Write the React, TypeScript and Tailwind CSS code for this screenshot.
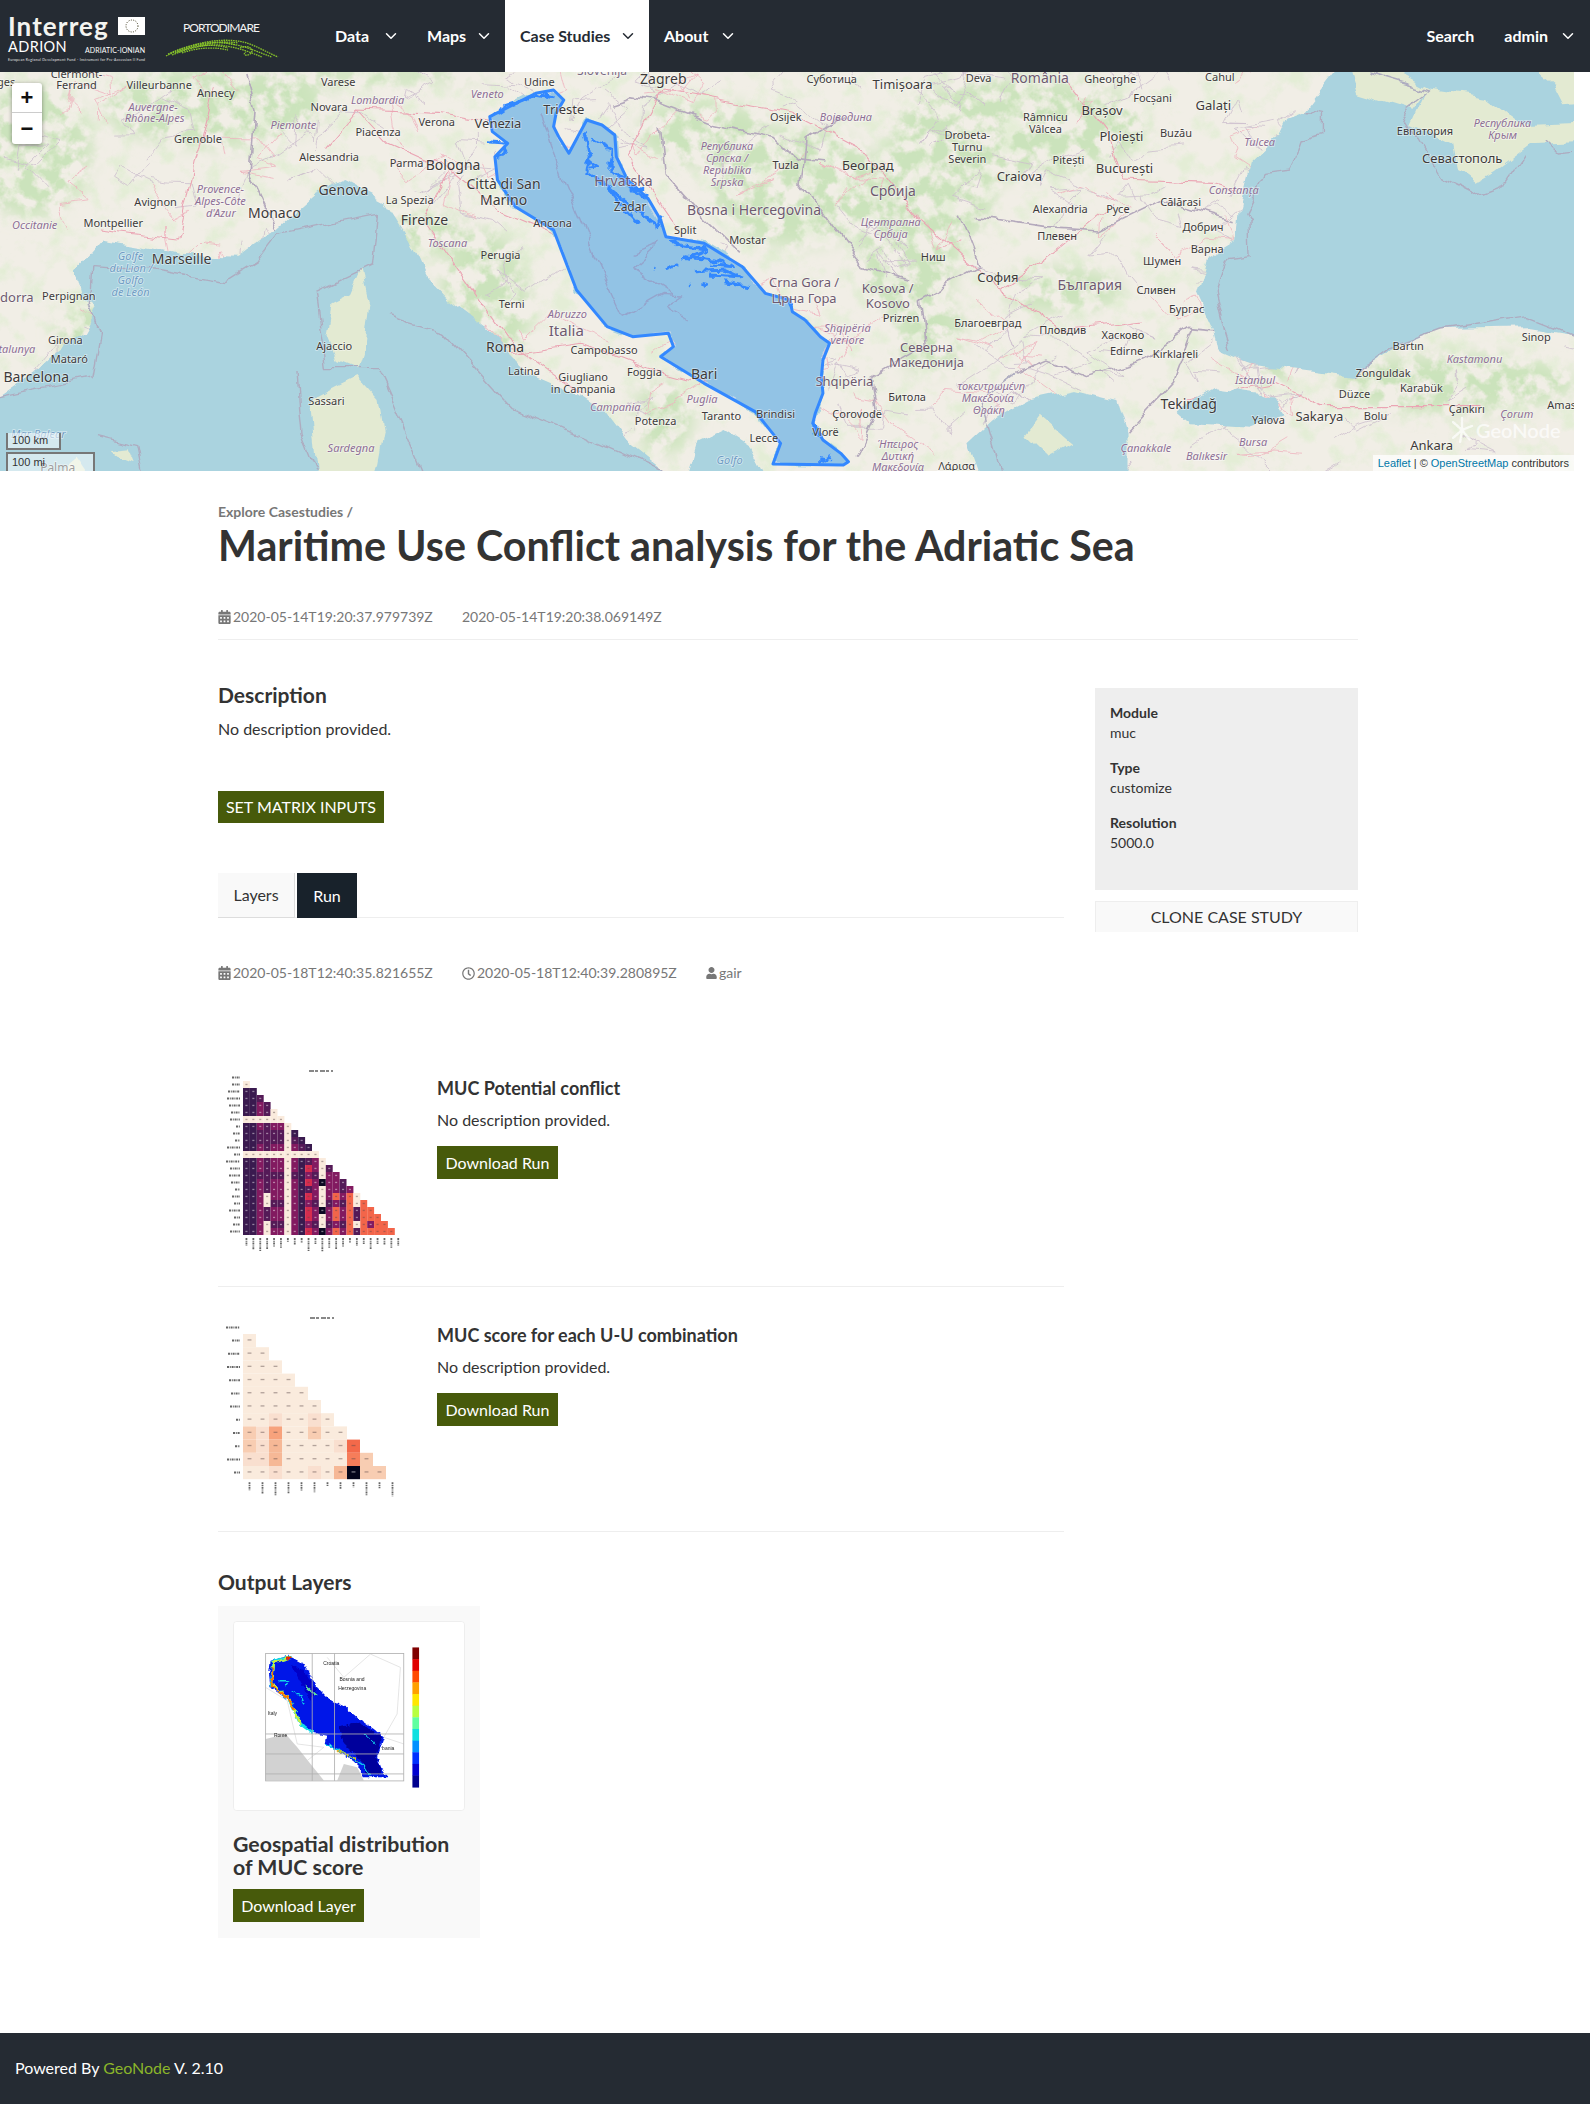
import { ChevronDown } from "lucide-react";
import { FaCalendarAlt, FaRegClock, FaUser } from "react-icons/fa";

// map coordinates: left labels are in "Z" space, x / 1.96 and y / 3 give page pixels
type Label = [string, number, number, number?, string?];
const R = "#8d6f95"; // region labels
const S = "#6f9cc4"; // sea labels
const T = "#3d3a3a";

const labelsWest: Label[] = [
  ["ges", 12, 245], ["Clermont-", 150, 222], ["Ferrand", 150, 255], ["Villeurbanne", 312, 255], ["Annecy", 423, 278],
  ["Varese", 663, 247], ["Udine", 1057, 245], ["Zagreb", 1300, 240, 14], ["Slovenija", 1180, 212, 12, "#7a6a85"],
  ["Auvergne-", 300, 320, 11, R], ["Rhône-Alpes", 303, 355, 11, R], ["Novara", 645, 320], ["Lombardia", 740, 300, 11, R],
  ["Veneto", 955, 283, 11, R], ["Trieste", 1105, 330, 13], ["Verona", 856, 366], ["Venezia", 976, 372, 13], ["Piemonte", 575, 375, 11, R],
  ["Piacenza", 741, 396], ["Grenoble", 388, 417], ["Alessandria", 645, 470], ["Parma", 797, 490], ["Bologna", 888, 498, 14],
  ["Genova", 673, 572, 14], ["Città di San", 987, 555, 14], ["Marino", 987, 602, 14], ["La Spezia", 803, 601], ["Monaco", 538, 641, 14],
  ["Provence-", 432, 568, 11, R], ["Alpes-Côte", 432, 604, 11, R], ["d'Azur", 433, 640, 11, R], ["Avignon", 305, 607], ["Firenze", 832, 663, 14],
  ["Occitanie", 68, 676, 11, R], ["Montpellier", 222, 670], ["Toscana", 877, 729, 11, R], ["Perugia", 981, 765], ["Ancona", 1083, 670],
  ["Marseille", 356, 780, 14], ["Golfe", 256, 768, 11, S], ["du Lion /", 257, 805, 11, S], ["Golfo", 256, 841, 11, S], ["de León", 256, 877, 11, S],
  ["dorra", 33, 895, 13, "#6e5a70"], ["Perpignan", 135, 889], ["Terni", 1003, 911], ["Abruzzo", 1112, 941, 11, R], ["Italia", 1110, 995, 15, "#6e5a70"],
  ["Girona", 128, 1021], ["Mataró", 136, 1078], ["talunya", 33, 1048, 11, R], ["Ajaccio", 655, 1037], ["Roma", 990, 1044, 14],
  ["Campobasso", 1184, 1051], ["Barcelona", 71, 1134, 14], ["Latina", 1027, 1113], ["Giugliano", 1143, 1130], ["in Campania", 1143, 1166],
  ["Foggia", 1263, 1116], ["Bari", 1380, 1125, 14], ["Sassari", 640, 1203], ["Puglia", 1376, 1198, 11, R], ["Campania", 1206, 1221, 11, R],
  ["Taranto", 1414, 1248], ["Brindisi", 1520, 1241], ["Potenza", 1285, 1264], ["Sardegna", 688, 1343, 11, R], ["Lecce", 1497, 1314],
  ["Golfo", 1430, 1381, 11, S], ["Mar Balear", 75, 1303, 11, S], ["Palma", 113, 1405, 12],
  ["Osijek", 1540, 350], ["Tuzla", 1540, 494], ["Република", 1425, 438, 11, R], ["Српска /", 1425, 474, 11, R], ["Republika", 1425, 510, 11, R], ["Srpska", 1425, 546, 11, R],
  ["Split", 1343, 690], ["Mostar", 1465, 721], ["Hrvatska", 1222, 545, 14, "#6e5a70"], ["Zadar", 1235, 622, 12],
  ["Bosna i Hercegovina", 1478, 634, 14, "#6e5a70"], ["Crna Gora /", 1576, 850, 13, "#6e5a70"], ["Црна Гора", 1576, 896, 13, "#6e5a70"],
];

const labelsEast: Label[] = [
  ["Суботица", 82, 238], ["Timișoara", 221, 254, 13], ["Deva", 370, 235], ["România", 490, 237, 14, "#6e5a70"], ["Gheorghe", 628, 238], ["Cahul", 843, 230],
  ["Focșani", 711, 294], ["Brașov", 612, 332, 13], ["Galați", 830, 317, 13], ["Војводина", 110, 350, 11, R], ["Râmnicu", 501, 350], ["Vâlcea", 501, 386],
  ["Drobeta-", 348, 406], ["Turnu", 348, 442], ["Severin", 348, 478], ["Ploiești", 650, 412, 13], ["Buzău", 757, 400], ["Tulcea", 921, 427, 11, R],
  ["Pitești", 546, 480], ["București", 656, 506, 13], ["Београд", 153, 497, 13], ["Craiova", 450, 532, 13], ["Србија", 202, 575, 14, "#6e5a70"],
  ["Constanța", 870, 571, 11, R], ["Călărași", 766, 606], ["Alexandria", 530, 626], ["Русе", 643, 627], ["Централна", 198, 665, 11, R], ["Србија", 198, 701, 11, R],
  ["Добрич", 810, 680], ["Плевен", 524, 709], ["Варна", 818, 747], ["Шумен", 730, 782], ["Ниш", 281, 770], ["София", 408, 833, 13], ["България", 588, 857, 14, "#6e5a70"],
  ["Сливен", 718, 869], ["Kosova /", 192, 866, 13, "#6e5a70"], ["Kosovo", 192, 911, 13, "#6e5a70"], ["Бургас", 778, 927], ["Prizren", 218, 955],
  ["Shqipëria", 113, 983, 11, R], ["veriore", 113, 1019, 11, R], ["Благоевград", 388, 970], ["Пловдив", 535, 990], ["Хасково", 653, 1006],
  ["Северна", 268, 1043, 13, "#6e5a70"], ["Македонија", 268, 1088, 13, "#6e5a70"], ["Edirne", 660, 1053], ["Kırklareli", 756, 1063],
  ["Shqipëria", 107, 1146, 13, "#6e5a70"], ["Битола", 230, 1192], ["τοκεντρωμένη", 395, 1158, 11, R], ["Μακεδονία", 388, 1193, 11, R], ["Θράκη", 390, 1229, 11, R],
  ["Tekirdağ", 782, 1215, 14], ["Yalova", 938, 1260], ["Sakarya", 1038, 1250, 13], ["Çorovodë", 132, 1242], ["Vlorë", 70, 1295],
  ["Ήπειρος", 212, 1332, 11, R], ["Δυτική", 212, 1367, 11, R], ["Μακεδονία", 212, 1402, 11, R], ["Λάρισα", 327, 1397], ["Çanakkale", 698, 1345, 11, R],
  ["Balıkesir", 817, 1367, 11, R], ["Bursa", 908, 1325, 11, R], ["Ankara", 1258, 1338, 13], ["İstanbul", 912, 1141, 11, R], ["Bolu", 1148, 1247],
  ["Düzce", 1107, 1181], ["Zonguldak", 1163, 1118], ["Karabük", 1238, 1164], ["Bartın", 1212, 1037], ["Kastamonu", 1342, 1078, 11, R], ["Sinop", 1463, 1012],
  ["Çankırı", 1327, 1226], ["Çorum", 1425, 1243, 11, R], ["Amas", 1513, 1216], ["Евпатория", 1245, 393], ["Севастополь", 1318, 477, 13], ["Республика", 1397, 369, 11, R], ["Крым", 1397, 405, 11, R],
];

const allLabels: Label[] = [...labelsWest, ...labelsEast.map((l) => [l[0], l[1] + 1548, l[2], l[3], l[4]] as Label)];

const seaWest = "-60,1230 0,1190 70,1115 95,1078 165,1000 190,930 165,900 150,810 200,720 300,745 355,765 470,770 540,690 620,580 675,540 750,600 800,720 830,820 880,900 950,980 1000,1060 1040,1120 1130,1180 1180,1230 1230,1330 1300,1415 1330,1460 -60,1460";
const corsica = "710,810 725,900 715,1030 700,1105 660,1080 640,1000 650,910 690,880";
const sardinia = "700,1130 740,1200 750,1300 730,1460 625,1460 610,1200 660,1160";
const adriatic = "1085,270 1105,300 1090,340 1085,380 1095,410 1115,460 1150,360 1180,375 1205,405 1208,470 1230,540 1270,595 1295,660 1305,710 1380,730 1455,800 1500,880 1548,900 1553,935 1578,960 1608,1010 1626,1030 1613,1080 1610,1130 1613,1180 1598,1240 1593,1270 1613,1320 1648,1360 1663,1385 1653,1395 1515,1392 1530,1330 1480,1235 1380,1150 1295,1070 1320,1040 1310,1000 1240,1010 1190,980 1130,870 1085,690 1010,620 975,540 970,470 995,430 965,395 960,350 1050,280";
const blackSea = "2633,180 2558,330 2523,350 2508,400 2448,490 2428,620 2423,720 2368,770 2348,880 2378,980 2388,1050 2448,1090 2548,1110 2648,1130 2728,1050 2818,990 2998,985 3140,1020 3140,180";
const crimea = "2798,265 2908,290 2978,370 3140,360 3140,420 2998,430 2928,510 2888,545 2858,510 2848,430 2768,370";
const aegean = "1928,1460 1898,1330 1948,1260 2018,1200 2108,1170 2188,1200 2208,1300 2208,1460";
const marmara = "2308,1230 2378,1165 2498,1190 2518,1240 2448,1280 2338,1270";
const taranto = "1340,1460 1365,1330 1420,1290 1470,1340 1510,1460";

const borders = [
  "480,216 500,330 490,520 545,700",
  "1200,310 1240,290 1280,300 1400,370 1520,410 1560,470 1620,480",
  "1290,380 1300,520 1370,640 1450,760",
  "1780,840 1690,800 1640,700 1570,560 1580,420 1650,350",
  "1880,650 1900,720 1920,800 1800,900 1810,1040 1710,1130 1720,1240 1680,1370",
  "1920,650 2050,680 2160,690 2280,600 2420,665",
  "1990,1120 2050,1080 2130,1130 2240,1080 2330,985 2400,995",
  "2340,985 2300,1150 2210,1300",
];
const maritime = [
  "180,800 175,920 195,1000 180,1130 0,1190",
  "180,800 300,810 440,848 500,790 545,700",
  "545,700 740,640 730,800 620,880 640,1100 700,1100 740,1100 770,1200 830,1415",
  "760,950 870,1000 1000,1220 1100,1280 1300,1415",
  "580,1120 590,1300 620,1415",
  "190,1310 270,1340 280,1415",
  "1060,340 1100,520 1170,780 1220,950 1300,880 1340,885 1305,920 1350,960",
  "1240,760 1290,730 1240,800 1320,880",
  "2448,660 2450,770 2400,780 2380,870 2400,1000 2410,1050",
  "2558,330 2590,340 2590,400 2550,420 2530,510 2480,520 2440,640 2450,665",
  "2680,216 2800,270 2750,330 2830,540 2890,585 2950,550 2990,460",
  "3087,460 3060,465 3030,420",
  "2650,1130 2730,1040 2820,990 2990,950 3040,980 3087,1010",
  "1960,1415 1920,1200 1990,1120",
];
const roads = [
  "640,440 700,330 860,340 1000,380", "700,330 760,430 890,520 980,630 1090,700", "190,690 350,720 380,500 420,260",
  "880,520 830,660 990,1010 1140,1180", "1300,270 1230,470 1330,690", "1300,270 1550,340 1700,460", "1700,460 1790,640 1960,870 2080,990 2240,960",
  "2200,540 2380,550 2420,570", "2200,540 2170,400 2090,240", "2330,1200 2500,1150 2590,1220 2680,1220 2900,1220", "1960,870 2060,760 2180,610",
  "1000,1060 1140,1030 1260,1100 1380,1150",
];
const greenSpots: [number, number, number, number][] = [
  [420, 320, 220, 120], [700, 225, 260, 30], [950, 920, 90, 230], [830, 700, 100, 60], [2000, 380, 250, 150], [1830, 560, 120, 200],
  [1560, 560, 170, 180], [1380, 400, 130, 100], [1780, 760, 100, 190], [2080, 870, 120, 70], [2850, 1150, 240, 90],
  [180, 1000, 70, 90], [2500, 1080, 40, 80], [1820, 1000, 70, 120], [680, 990, 40, 90], [60, 450, 120, 200], [1300, 1250, 60, 110], [680, 1280, 60, 120],
];

// thin local borders: seeded so the picture does not change between runs
function minorLines(count: number, seed: number) {
  const out: string[] = [];
  let s = seed;
  const rnd = () => {
    s = (s * 16807) % 2147483647;
    return s / 2147483647;
  };
  for (let i = 0; i < count; i++) {
    let x = rnd() * 3087;
    let y = 216 + rnd() * 1200;
    const pts = [`${x},${y}`];
    for (let k = 0; k < 4; k++) {
      x += (rnd() - 0.5) * 150;
      y += (rnd() - 0.5) * 170;
      pts.push(`${x},${y}`);
    }
    out.push(pts.join(" "));
  }
  return out;
}
const localBorders = minorLines(130, 4711);
const localRoads = minorLines(70, 911);

function AdriaMap() {
  return (
    <svg viewBox="0 72 1574 399" className="block w-full h-full" preserveAspectRatio="none">
      <defs>
        <filter id="terrain" x="0" y="0" width="100%" height="100%">
          <feTurbulence type="fractalNoise" baseFrequency="0.045" numOctaves="4" seed="7" />
          <feColorMatrix values="0 0 0 0 0.75  0 0 0 0 0.85  0 0 0 0 0.65  3.6 0 0 0 -1.75" />
        </filter>
        <filter id="mountains" x="-20%" y="-20%" width="140%" height="140%">
          <feGaussianBlur in="SourceAlpha" stdDeviation="9" result="area" />
          <feTurbulence type="fractalNoise" baseFrequency="0.06" numOctaves="4" seed="21" />
          <feColorMatrix values="0 0 0 0 0.60  0 0 0 0 0.77  0 0 0 0 0.50  4.5 0 0 0 -1.75" result="noise" />
          <feComposite in="noise" in2="area" operator="in" />
        </filter>
        <filter id="coast" x="-5%" y="-5%" width="110%" height="110%">
          <feTurbulence type="fractalNoise" baseFrequency="0.035" numOctaves="3" seed="4" />
          <feDisplacementMap in="SourceGraphic" scale="14" xChannelSelector="R" yChannelSelector="G" />
        </filter>
        <filter id="jag" x="-5%" y="-5%" width="110%" height="110%">
          <feTurbulence type="fractalNoise" baseFrequency="0.12" numOctaves="2" seed="9" />
          <feDisplacementMap in="SourceGraphic" scale="9" xChannelSelector="R" yChannelSelector="G" />
        </filter>
      </defs>
      <rect x="0" y="72" width="1574" height="399" fill="#f1eee6" />
      <rect x="0" y="72" width="1574" height="399" filter="url(#terrain)" opacity="0.8" />
      <g filter="url(#mountains)">
        <g transform="scale(0.5102 0.33333)">
          {greenSpots.map((g, i) => (
            <ellipse key={i} cx={g[0]} cy={g[1]} rx={g[2]} ry={g[3]} fill="#000" />
          ))}
        </g>
      </g>
      <g filter="url(#coast)">
        <g transform="scale(0.5102 0.33333)" fill="none">
          {localBorders.map((r) => (
            <polyline key={r} points={r} stroke="#cdbfce" strokeWidth="0.8" vectorEffect="non-scaling-stroke" />
          ))}
          {localRoads.map((r) => (
            <polyline key={r} points={r} stroke="#efb4bf" strokeWidth="0.8" vectorEffect="non-scaling-stroke" />
          ))}
          {roads.map((r) => (
            <polyline key={r} points={r} stroke="#eba5b4" strokeWidth="1.1" vectorEffect="non-scaling-stroke" />
          ))}
          {borders.map((b) => (
            <polyline key={b} points={b} stroke="#b4a9bc" strokeWidth="1.6" vectorEffect="non-scaling-stroke" />
          ))}
        </g>
      </g>
      <g filter="url(#coast)">
        <g transform="scale(0.5102 0.33333)">
          <g fill="#aad3df">
            <polygon points={seaWest} />
            <polygon points={blackSea} />
            <polygon points={aegean} />
            <polygon points={marmara} />
            <polygon points={taranto} />
            <polygon points={adriatic} />
          </g>
          <g fill="#e3ead2">
            <polygon points={corsica} />
            <polygon points={sardinia} />
            <polygon points={crimea} />
            <polygon points="80,1460 150,1370 190,1460" />
            <polygon points="215,1350 250,1345 262,1390 230,1370" />
            <polygon points="2640,180 2700,180 2800,265 2768,330 2660,280" />
            <polygon points="2040,1250 2100,1330 2050,1370 2010,1310" />
            <polygon points="2980,180 3140,180 3140,300 3060,310 3040,250" />
          </g>
          <g fill="none">
            {maritime.map((m) => (
              <polyline key={m} points={m} stroke="#aeacc0" strokeWidth="1.4" strokeLinejoin="round" vectorEffect="non-scaling-stroke" />
            ))}
          </g>
        </g>
      </g>
      <g transform="scale(0.5102 0.33333)">
        <polygon points={adriatic} fill="#3388ff" fillOpacity="0.2" stroke="#3388ff" strokeWidth="3" strokeLinejoin="round" vectorEffect="non-scaling-stroke" />
      </g>
      <g filter="url(#jag)">
        <g transform="scale(0.5102 0.33333)" fill="none" stroke="#3388ff" strokeWidth="3" strokeLinejoin="round">
          {[
            "960,350 990,320 1030,300 1050,280 1085,290",
            "955,425 995,430 985,465 970,470",
            "1145,400 1155,470 1150,520 1190,560 1220,620 1250,670",
            "1160,420 1200,450 1195,500 1240,570 1270,595",
            "1175,540 1230,610 1290,680 1300,650",
            "1150,480 1170,500 1155,505",
            "1210,520 1260,570 1230,570",
            "1310,715 1340,740 1385,750 1350,775 1335,770",
            "1340,770 1400,780 1440,800 1395,795",
            "1360,815 1420,810 1450,830 1390,825",
            "1420,845 1470,860",
            "1280,800 1285,805",
            "1305,810 1325,795 1310,805",
            "1350,850 1352,855",
            "1375,850 1388,855 1380,860",
            "1595,1265 1600,1300 1612,1310",
            "1608,1375 1620,1380 1630,1372",
            "1545,895 1552,925",
          ].map((p) => (
            <polyline key={p} points={p} vectorEffect="non-scaling-stroke" />
          ))}
        </g>
      </g>
      <g fontFamily="'Noto Sans', sans-serif" textAnchor="middle">
        {allLabels.map(([text, x, y, size, color], i) => (
          <text
            key={i}
            x={x / 1.96}
            y={y / 3 + 4}
            fontSize={size ?? 11}
            fill={color ?? T}
            fontStyle={color === R || color === S ? "italic" : "normal"}
            stroke="#ffffff"
            strokeOpacity="0.5"
            strokeWidth="1.5"
            paintOrder="stroke"
          >
            {text}
          </text>
        ))}
      </g>
    </svg>
  );
}

function Logo() {
  return (
    <svg width="300" height="72" viewBox="0 0 300 72" className="block shrink-0">
      <text x="8" y="36" fontFamily="Lato, sans-serif" fontWeight="700" fontSize="26" letterSpacing="1.1" fill="#f4f4f0">
        Interreg
      </text>
      <rect x="118" y="17" width="27" height="18" fill="#ffffff" />
      <circle cx="132" cy="26" r="6" fill="none" stroke="#403c20" strokeWidth="1" strokeDasharray="1 1.4" />
      <text x="8" y="52" fontFamily="Lato, sans-serif" fontSize="14.5" letterSpacing="0.4" fill="#ffffff">
        ADRION
      </text>
      <text x="85" y="52.5" fontFamily="Lato, sans-serif" fontSize="7" fill="#ffffff" textLength="60">
        ADRIATIC-IONIAN
      </text>
      <text x="8" y="61" fontFamily="Lato, sans-serif" fontSize="3.4" fill="#e8e8e8" textLength="137">
        European Regional Development Fund - Instrument for Pre-Accession II Fund
      </text>
      <text x="183" y="32" fontFamily="Lato, sans-serif" fontSize="12" fill="#f4f4f4" textLength="77">
        PORTODIMARE
      </text>
      <g fill="none" stroke="#86c22a" strokeWidth="1.3" strokeDasharray="1.6 0.8">
        <path d="M166 56 C190 44 215 38 237 41 C250 42 262 50 278 57" />
        <path d="M168 54 C192 43 215 40 232 44 C248 47 260 53 272 57" />
        <path d="M172 55 C195 46 212 43 226 46 C240 48 252 53 262 57" />
        <path d="M175 53 C195 44 218 40 238 43" />
        <path d="M178 52 C198 44 216 44 228 48" />
        <path d="M240 48 C247 44 256 49 250 54 C246 57 242 54 246 52" />
        <path d="M182 53 C198 47 216 47 228 50" />
        <path d="M200 46 C212 42 224 42 236 45" />
      </g>
    </svg>
  );
}

function NavItem({ label, active, width }: { label: string; active?: boolean; width: string }) {
  return (
    <div className={`h-[72px] ${width} flex items-center justify-between pl-[15px] pr-[12px] text-[16px] font-bold ${active ? "bg-white text-[#252b33]" : "text-white"}`}>
      <span>{label}</span>
      <ChevronDown className="w-[18px] h-[18px]" strokeWidth={2} />
    </div>
  );
}

const heatColors: Record<string, string> = {
  L: "#faebdd",
  D: "#3a1a4f",
  P: "#541a57",
  M: "#821a60",
  R: "#d52c4e",
  O: "#f3654a",
  K: "#0b0822",
  a: "#faebdd",
  b: "#f9dfcf",
  c: "#f8cdb2",
  d: "#f7a27c",
  e: "#f6b896",
  f: "#f3694a",
  g: "#f67d5a",
  k: "#03051a",
};

const conflictRows = [
  "L", "DD", "DDP", "DDMP", "DDMPL", "LLLLLL", "DDMPMML", "DDPPPPLD", "DDPPPPLPD", "DDMPMMLMPD", "LLLLLLLLLLL", "DDMPMMLMDPML",
  "DDMPMMLMDRMLP", "DDPPPPLPDMPLMM", "DDMPMMLMDRMKMMP", "DDMPMMLMDPMLMMPM", "DDMLMMLMDRMLMOMOL", "DDMLPPLMDMPLPMPOLO",
  "DDMPMMLMDRMKMOMOPOO", "DDMPMMLMDRMLMOMOPOOO", "DDMLPPLMDMPLPMPOLOMOO", "DDMLMMLMDRMKMOMOPOOOOO",
];
const scoreRows = ["a", "aa", "aaa", "aaaa", "aaaaa", "aaaaaa", "aabaaba", "cbdaacaa", "cbeaaaabf", "bbeaaaaagc", "aabaabaekcc"];
const labelWidths = [8, 12, 13, 11, 9, 10, 4, 7, 5, 13, 6, 14, 10, 11, 9, 5, 8, 6, 11, 6, 7, 10, 8];

type HeatProps = { rows: string[]; x0: number; y0: number; cw: number; ch: number; vx: number; vy: number; h: number; title: [number, number] };

function Heatmap({ rows, x0, y0, cw, ch, vx, vy, h, title }: HeatProps) {
  const n = rows.length;
  return (
    <svg width="202" height={h} viewBox={`${vx} ${vy} 202 ${h}`} className="block shrink-0 blur-[0.35px]">
      <line x1={title[0]} x2={title[0] + 24} y1={title[1]} y2={title[1]} stroke="#888" strokeWidth="2" strokeDasharray="5 1 3 2" />
      {[...rows, ""].map((r, i) => {
        const ly = r ? y0 + (i + 0.5) * ch : y0 - 0.5 * ch;
        return (
          <g key={i}>
            <line x1={x0 - 3 - labelWidths[i]} x2={x0 - 3} y1={ly} y2={ly} stroke="#666" strokeWidth="2" strokeDasharray="2 0.8 1 0.8" />
            {r.split("").map((c, j) => (
              <g key={j}>
                <rect x={x0 + j * cw} y={y0 + i * ch} width={cw} height={ch} fill={heatColors[c]} />
                <rect
                  x={x0 + (j + 0.35) * cw}
                  y={y0 + (i + 0.4) * ch}
                  width={cw * 0.3}
                  height={1.3}
                  fill={"DPMKk".includes(c) ? "#ffffff" : "#5a4a4a"}
                  opacity="0.45"
                />
              </g>
            ))}
          </g>
        );
      })}
      {Array.from({ length: n + 1 }).map((_, j) => (
        <line
          key={j}
          x1={x0 + (j + 0.5) * cw}
          x2={x0 + (j + 0.5) * cw}
          y1={y0 + n * ch + 3}
          y2={y0 + n * ch + 3 + labelWidths[j]}
          stroke="#666"
          strokeWidth="1.8"
          strokeDasharray="2 0.8 1 0.8"
        />
      ))}
    </svg>
  );
}

function LayerThumb() {
  const bar = ["#800000", "#e00000", "#ff4a00", "#ffa000", "#ffe600", "#b8ff40", "#60ffa0", "#10e0e0", "#0090ff", "#0030ff", "#0000d0", "#00008f"];
  return (
    <svg width="230" height="188" viewBox="70 64 691 564" className="block blur-[0.3px]">
      <defs>
        <filter id="plotEdge" x="-5%" y="-5%" width="110%" height="110%">
          <feTurbulence type="fractalNoise" baseFrequency="0.08" numOctaves="2" seed="3" />
          <feDisplacementMap in="SourceGraphic" scale="14" xChannelSelector="R" yChannelSelector="G" />
        </filter>
      </defs>
      <rect x="70" y="64" width="691" height="564" fill="#ffffff" />
      <polygon points="165,415 225,400 260,440 300,490 340,540 165,540" fill="#d2d2d2" />
      <polygon points="400,490 440,500 460,540 380,540" fill="#d2d2d2" />
      <g fill="none" stroke="#d8d8d8" strokeWidth="2">
        <path d="M350 170 L400 230 L480 160 L570 200 L560 340 L520 410 L580 430" />
        <path d="M165 260 L230 300 L260 430 L340 440 L290 480" />
      </g>
      <g filter="url(#plotEdge)">
        <polygon points="235,165 280,190 320,260 350,290 370,305 405,320 445,355 490,385 520,410 500,470 520,520 535,530 460,530 440,490 400,460 345,430 350,405 300,395 265,365 235,300 180,260 175,220 180,180" fill="#0018e8" />
        <polygon points="385,380 445,365 490,395 515,410 497,470 515,520 465,520 460,490 400,430" fill="#00009c" />
        <polygon points="240,190 280,210 320,270 300,300" fill="#0000c8" />
        <g fill="none" strokeLinecap="round" strokeLinejoin="round">
          <polyline points="240,170 190,180 182,250 235,295 270,370 305,395" stroke="#10d8e8" strokeWidth="9" />
          <polyline points="345,430 400,455 460,495 478,525" stroke="#10c8e8" strokeWidth="4" />
          <polyline points="240,170 190,185 185,250 235,295 270,370" stroke="#c8f040" strokeWidth="6" />
          <polyline points="186,200 184,255 235,295 250,325" stroke="#ff7000" strokeWidth="5" />
          <polyline points="240,170 232,174" stroke="#f02000" strokeWidth="6" />
          <polyline points="205,240 235,240 225,255" stroke="#10d8e8" strokeWidth="4" />
          <polyline points="245,270 270,285 280,310" stroke="#10d8e8" strokeWidth="4" />
          <polyline points="285,255 320,285" stroke="#60e0a0" strokeWidth="5" />
          <polyline points="460,400 495,430" stroke="#10c8e8" strokeWidth="3" />
          <polyline points="380,450 400,455 440,480" stroke="#ffc000" strokeWidth="3" />
        </g>
      </g>
      <g stroke="#b0b0b0" strokeWidth="2.5" fill="none">
        <rect x="165" y="158" width="415" height="383" />
        <line x1="305" x2="305" y1="158" y2="541" />
        <line x1="372" x2="372" y1="158" y2="541" />
        <line x1="165" x2="580" y1="400" y2="400" />
        <line x1="165" x2="580" y1="460" y2="460" />
        <line x1="165" x2="580" y1="520" y2="520" />
      </g>
      <g fontFamily="'Liberation Sans', sans-serif" fontSize="15" fill="#222">
        <text x="338" y="192">Croatia</text>
        <text x="387" y="242">Bosnia and</text>
        <text x="383" y="267">Herzegovina</text>
        <text x="172" y="344">Italy</text>
        <text x="190" y="409">Rome</text>
        <text x="515" y="449">bania</text>
      </g>
      {bar.map((c, i) => (
        <rect key={c} x="606" y={140 + i * 35} width="20" height="36" fill={c} />
      ))}
    </svg>
  );
}

function DownloadButton({ label, width }: { label: string; width: string }) {
  return <div className={`h-[33px] ${width} bg-[#475a0b] text-white text-[16px] flex items-center justify-center`}>{label}</div>;
}

function Meta({ icon, text, width }: { icon?: React.ReactNode; text: string; width?: string }) {
  return (
    <div className={`flex items-center gap-[1px] ${width ?? ""}`}>
      {icon}
      <span>{text}</span>
    </div>
  );
}

function RunRow({ title, heat }: { title: string; heat: React.ReactNode }) {
  return (
    <div className="flex gap-[17px] border-b border-[#eeeeee] pb-[21px] w-[846px]">
      {heat}
      <div className="pt-[16px]">
        <h4 className="text-[18px] leading-[24px] font-bold text-[#333]">{title}</h4>
        <p className="mt-[9px] text-[16px] leading-[22px] text-[#333]">No description provided.</p>
        <div className="mt-[15px]">
          <DownloadButton label="Download Run" width="w-[121px]" />
        </div>
      </div>
    </div>
  );
}

export default function App() {
  return (
    <div className="w-[1590px] h-[2104px] bg-white relative font-['Lato',sans-serif] text-[#333] overflow-hidden">
      <header className="h-[72px] bg-[#252b33] flex items-center">
        <Logo />
        <nav className="flex ml-[20px]">
          <NavItem label="Data" width="w-[92px]" />
          <NavItem label="Maps" width="w-[93px]" />
          <NavItem label="Case Studies" width="w-[144px]" active />
          <NavItem label="About" width="w-[100px]" />
        </nav>
        <div className="ml-auto flex items-center text-white text-[16px] font-bold pr-[13px]">
          <span>Search</span>
          <span className="ml-[30px]">admin</span>
          <ChevronDown className="ml-[11px] w-[18px] h-[18px]" strokeWidth={2} />
        </div>
      </header>

      <section className="relative w-[1574px] h-[399px] overflow-hidden">
        <AdriaMap />
        <div className="absolute left-[12px] top-[11px] w-[30px] h-[61px] bg-white rounded-[3px] shadow-[0_1px_4px_rgba(0,0,0,0.4)] flex flex-col font-['Liberation_Sans',sans-serif] font-bold text-[#111]">
          <div className="h-[30px] flex items-center justify-center text-[22px] border-b border-[#ccc]">+</div>
          <div className="h-[30px] flex items-center justify-center text-[22px]">−</div>
        </div>
        <div className="absolute left-[6px] top-[361px] w-[55px] h-[17px] border-2 border-t-0 border-[#777] bg-white/50 text-[11px] leading-[15px] pl-[4px] text-[#333] font-['Liberation_Sans',sans-serif]">100 km</div>
        <div className="absolute left-[6px] top-[380px] w-[89px] h-[19px] border-2 border-b-0 border-[#777] bg-white/50 text-[11px] leading-[17px] pl-[4px] text-[#333] font-['Liberation_Sans',sans-serif]">100 mi</div>
        <div className="absolute right-0 bottom-0 h-[16px] px-[5px] bg-white/70 text-[11px] leading-[16px] text-[#333] font-['Liberation_Sans',sans-serif]">
          <span className="text-[#0078a8]">Leaflet</span> | © <span className="text-[#0078a8]">OpenStreetMap</span> contributors
        </div>
        <div className="absolute left-[1450px] top-[344px] flex items-center gap-[2px] text-white/70">
          <svg width="24" height="28" viewBox="0 0 24 28" fill="none" stroke="currentColor" strokeWidth="2.4" strokeLinecap="round" strokeDasharray="3 1.5">
            <path d="M12 14 L12 2 M12 14 L3 6 M12 14 L22 10 M12 14 L3 22 M12 14 L20 24 M12 14 L10 27" />
          </svg>
          <span className="text-[20px] leading-[28px] font-semibold">GeoNode</span>
        </div>
      </section>

      <main className="ml-[218px] w-[1140px]">
        <div className="pt-[31px] text-[14px] leading-[20px] font-bold text-[#777]">Explore Casestudies /</div>
        <h1 className="text-[41.2px] leading-[46px] font-bold text-[#333]">Maritime Use Conflict analysis for the Adriatic Sea</h1>
        <div className="mt-[39px] pb-[12px] border-b border-[#eeeeee] flex text-[14px] leading-[20px] text-[#777]">
          <Meta icon={<FaCalendarAlt className="w-[13px] h-[14px] mr-[1px]" />} text="2020-05-14T19:20:37.979739Z" width="w-[244px]" />
          <Meta text="2020-05-14T19:20:38.069149Z" />
        </div>

        <div className="flex">
          <div className="w-[846px]">
            <h3 className="pt-[42px] text-[21px] leading-[26px] font-bold text-[#333]">Description</h3>
            <p className="mt-[10px] text-[16px] leading-[22px]">No description provided.</p>
            <div className="mt-[51px] w-[166px] h-[32px] bg-[#475a0b] text-white text-[16px] flex items-center justify-center">SET MATRIX INPUTS</div>
            <div className="mt-[50px] flex gap-[2px] border-b border-[#eeeeee] h-[45px]">
              <div className="w-[77px] h-[45px] bg-[#f9f9f9] border-r border-b border-[#dddddd] flex items-center justify-center text-[16px]">Layers</div>
              <div className="w-[60px] h-[45px] bg-[#18222b] text-white flex items-center justify-center text-[16px]">Run</div>
            </div>
            <div className="mt-[45px] flex text-[14px] leading-[20px] text-[#777]">
              <Meta icon={<FaCalendarAlt className="w-[13px] h-[14px] mr-[1px]" />} text="2020-05-18T12:40:35.821655Z" width="w-[244px]" />
              <Meta icon={<FaRegClock className="w-[13px] h-[13px] mr-[1px]" />} text="2020-05-18T12:40:39.280895Z" width="w-[244px]" />
              <Meta icon={<FaUser className="w-[11px] h-[12px] mr-[1px]" />} text="gair" />
            </div>
            <div className="mt-[77px]">
              <RunRow
                title="MUC Potential conflict"
                heat={<Heatmap rows={conflictRows} x0={243} y0={1081} cw={6.9} ch={7} vx={218} vy={1060} h={205} title={[309, 1071]} />}
              />
            </div>
            <div className="mt-[20px]">
              <RunRow
                title="MUC score for each U-U combination"
                heat={<Heatmap rows={scoreRows} x0={243} y0={1334} cw={13} ch={13.2} vx={218} vy={1307} h={203} title={[310, 1318]} />}
              />
            </div>
            <h3 className="mt-[37px] text-[21px] leading-[26px] font-bold text-[#333]">Output Layers</h3>
            <div className="mt-[11px] w-[262px] h-[332px] bg-[#f9f9f9] pt-[15px] px-[15px]">
              <div className="w-[232px] h-[190px] bg-white border border-[#eeeeee] rounded-[4px] overflow-hidden">
                <LayerThumb />
              </div>
              <h3 className="mt-[22px] text-[21.3px] leading-[23px] font-bold text-[#333]">Geospatial distribution of MUC score</h3>
              <div className="mt-[10px]">
                <DownloadButton label="Download Layer" width="w-[131px]" />
              </div>
            </div>
          </div>

          <aside className="ml-[31px] w-[263px] pt-[48px]">
            <div className="h-[202px] bg-[#eeeeee] px-[15px] pt-[15px] text-[14px] leading-[20px]">
              <div className="font-bold">Module</div>
              <div>muc</div>
              <div className="mt-[15px] font-bold">Type</div>
              <div>customize</div>
              <div className="mt-[15px] font-bold">Resolution</div>
              <div>5000.0</div>
            </div>
            <div className="mt-[11px] h-[31px] bg-[#f9f9f9] border-x border-t border-[#eeeeee] text-[16px] flex items-center justify-center">CLONE CASE STUDY</div>
          </aside>
        </div>
      </main>

      <footer className="absolute left-0 right-0 bottom-0 h-[71px] bg-[#252b33] flex items-center pl-[15px] pb-[2px] text-[16px] text-white">
        Powered By&nbsp;<span className="text-[#8bb52a]">GeoNode</span>&nbsp;V. 2.10
      </footer>
    </div>
  );
}
